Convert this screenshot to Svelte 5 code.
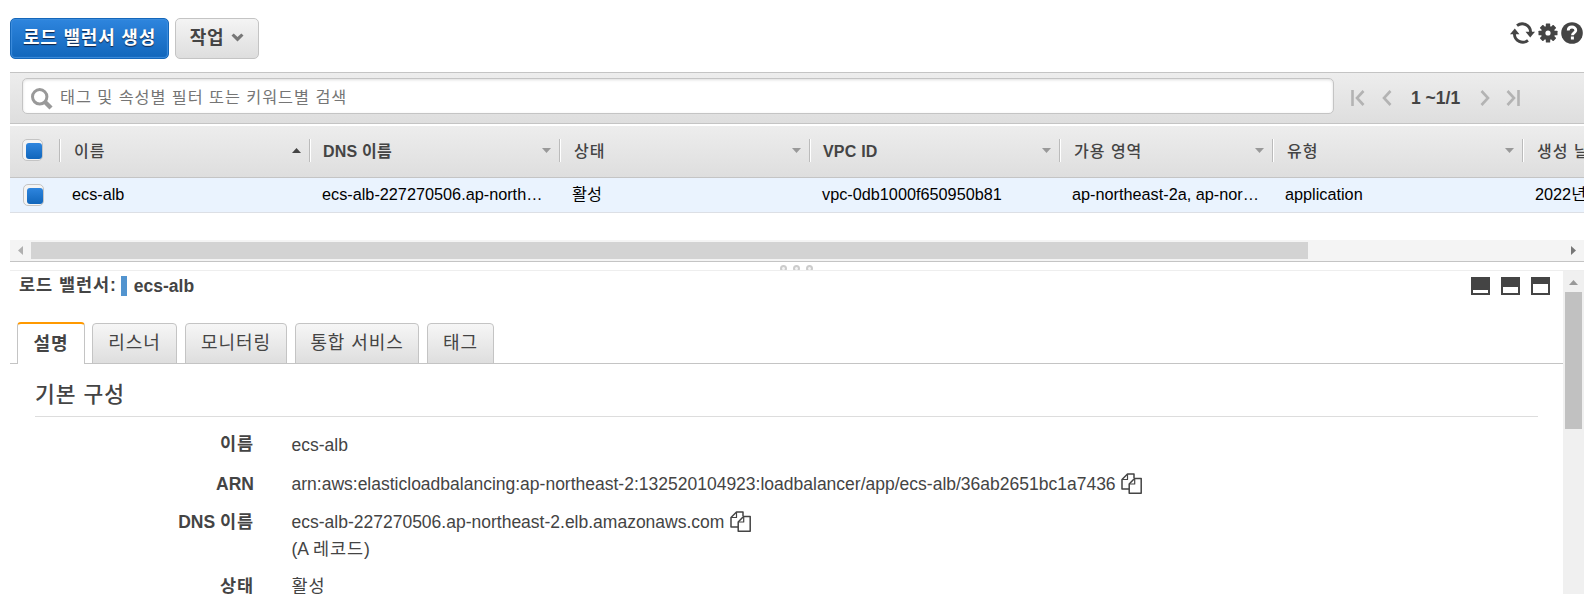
<script>
  let columns = [
    { title: "이름", value: "ecs-alb", width: 250, sort: "asc" },
    { title: "DNS 이름", value: "ecs-alb-227270506.ap-north…", width: 250, mixed: true },
    { title: "상태", value: "활성", width: 250 },
    { title: "VPC ID", value: "vpc-0db1000f650950b81", width: 250, mixed: true },
    { title: "가용 영역", value: "ap-northeast-2a, ap-nor…", width: 213 },
    { title: "유형", value: "application", width: 250 },
    { title: "생성 날짜", value: "2022년", width: 250 }
  ];
  let tabs = [
    { label: "설명", width: 68 },
    { label: "리스너", width: 85 },
    { label: "모니터링", width: 102 },
    { label: "통합 서비스", width: 124 },
    { label: "태그", width: 67 }
  ];
  let active = "설명";
  let arn = "arn:aws:elasticloadbalancing:ap-northeast-2:132520104923:loadbalancer/app/ecs-alb/36ab2651bc1a7436";
</script>

{#snippet copyIcon()}
  <svg class="copy" width="21" height="21" viewBox="0 0 21 21" fill="none" stroke="#444" stroke-width="1.5" stroke-linejoin="round">
    <path d="M8 16H1V6.5L6.5 1H13v4" />
    <path d="M6.5 1v5.5H1" stroke-width="1.2" />
    <path d="M8.2 11 13.5 5.5h6.7v14.7h-12z" />
    <path d="M13.7 5.5V11H8.2" stroke-width="1.2" />
  </svg>
{/snippet}

<div class="page">
  <header class="actions">
    <button class="btn primary">로드 밸런서 생성</button>
    <button class="btn">작업
      <svg width="13" height="9" viewBox="0 0 13 9"><path d="M.5 2.5 2.7.5 6.5 4 10.3.5l2.2 2L6.5 8.5z" fill="#777" /></svg>
    </button>
    <div class="tools">
      <svg width="25" height="22" viewBox="0 0 26 22" fill="none" stroke="#444" stroke-width="3">
        <path d="M7.3 3.4A8.7 8.7 0 0 1 21.4 10" />
        <path d="M18.7 18.6A8.7 8.7 0 0 1 4.6 12" />
        <path d="M16.2 9.8h9.8L21 15.8z" fill="#444" stroke="none" />
        <path d="M0 12.2h9.8L5 6.2z" fill="#444" stroke="none" />
      </svg>
      <svg width="20" height="20" viewBox="0 0 20 20" fill="#444">
        {#each [0, 45, 90, 135] as a}
          <rect x="7.8" y="0.5" width="4.4" height="19" rx="0.5" transform="rotate({a} 10 10)" />
        {/each}
        <circle cx="10" cy="10" r="7" />
        <circle cx="10" cy="10" r="2.6" fill="#fff" />
      </svg>
      <svg width="22" height="22" viewBox="0 0 22 22">
        <circle cx="11" cy="11" r="10.8" fill="#444" />
        <path d="M7.2 8.4C7.2 3.8 14.8 4 14.8 8.2c0 2.7-3.4 2.6-3.4 5" fill="none" stroke="#fff" stroke-width="2.8" />
        <rect x="9.9" y="14.5" width="3" height="3" fill="#fff" />
      </svg>
    </div>
  </header>

  <div class="filter">
    <div class="search">
      <svg width="22" height="22" viewBox="0 0 22 22" fill="none" stroke="#999">
        <circle cx="8.7" cy="8.8" r="7.2" stroke-width="3" />
        <path d="m14 14 6 6" stroke-width="4.4" />
      </svg>
      <span>태그 및 속성별 필터 또는 키워드별 검색</span>
    </div>
    <div class="pager">
      <svg width="14" height="18" viewBox="0 0 14 18"><path d="M1.5 1v16M12.5 2 6 9l6.5 7" /></svg>
      <svg width="10" height="18" viewBox="0 0 10 18"><path d="M8.5 2 2 9l6.5 7" /></svg>
      <b>1 ~1/1</b>
      <svg width="10" height="18" viewBox="0 0 10 18"><path d="m1.5 2 6.5 7-6.5 7" /></svg>
      <svg width="14" height="18" viewBox="0 0 14 18"><path d="m1.5 2 6.5 7-6.5 7M12.5 1v16" /></svg>
    </div>
  </div>

  <div class="grid">
    <div class="row head">
      <div class="pick"><i class="check"></i></div>
      {#each columns as col}
        <div class="th" style="width:{col.width}px">
          <span class:mixed={col.mixed}>{col.title}</span>
          <svg width="9" height="5" viewBox="0 0 9 5">
            {#if col.sort === "asc"}<path d="M0 5h9L4.5 0z" fill="#444" />{:else}<path d="M0 0h9L4.5 5z" fill="#999" />{/if}
          </svg>
        </div>
      {/each}
    </div>
    <div class="row body">
      <div class="pick"><i class="check"></i></div>
      {#each columns as col}
        <div class="td" style="width:{col.width}px">{col.value}</div>
      {/each}
    </div>
  </div>

  <div class="hscroll">
    <svg width="5" height="9" viewBox="0 0 5 9"><path d="M5 0v9L0 4.5z" fill="#b0b0b0" /></svg>
    <div class="thumb"></div>
    <svg width="5" height="9" viewBox="0 0 5 9"><path d="M0 0v9l5-4.5z" fill="#777" /></svg>
  </div>
  <div class="splitter"><i></i><i></i><i></i></div>

  <div class="detail">
    <section class="pane">
      <div class="pane-head">
        <b class="caption">로드 밸런서:</b><i class="mark"></i><b>ecs-alb</b>
        <div class="sizes">
          {#each [3, 6, 9] as h}
            <svg width="19" height="18" viewBox="0 0 19 18"><path d="M0 0h19v18H0z" fill="#444" /><rect x="2" y={16 - h} width="15" height={h} fill="#fff" /></svg>
          {/each}
        </div>
      </div>
      <nav class="tabs">
        {#each tabs as tab}
          <button class="tab" class:active={tab.label === active} style="width:{tab.width}px">{tab.label}</button>
        {/each}
      </nav>
      <h2>기본 구성</h2>
      <dl>
        <dt class="ko">이름</dt>
        <dd>ecs-alb</dd>
        <dt>ARN</dt>
        <dd>{arn}{@render copyIcon()}</dd>
        <dt>DNS <span class="ko">이름</span></dt>
        <dd>ecs-alb-227270506.ap-northeast-2.elb.amazonaws.com{@render copyIcon()}<br />(A <span class="ko">레코드</span>)</dd>
        <dt class="ko last">상태</dt>
        <dd class="ko last">활성</dd>
      </dl>
    </section>
    <div class="vscroll">
      <svg width="9" height="5" viewBox="0 0 9 5"><path d="M0 5h9L4.5 0z" fill="#999" /></svg>
      <div class="thumb"></div>
    </div>
  </div>
</div>

<style>
  :global(body) { margin: 0; background: #fff; overflow: hidden; }
  * { box-sizing: border-box; }
  svg { display: block; flex: none; }
  .page { width: 1584px; height: 594px; padding-left: 10px; overflow: hidden; display: flex; flex-direction: column; color: #444; font: 17.5px "Liberation Sans", "Noto Sans CJK KR", sans-serif; }

  .actions { height: 72px; flex: none; padding-top: 18px; display: flex; align-items: flex-start; gap: 6px; }
  .btn { height: 41px; width: 84px; padding: 0 0 5px; display: flex; align-items: center; justify-content: center; gap: 7px; border: 1px solid #c4c4c4; border-radius: 5px; background: linear-gradient(#f4f4f4, #dedede); color: #444; font: bold 18px "Liberation Sans", "Noto Sans CJK KR", sans-serif; letter-spacing: 0.8px; white-space: nowrap; }
  .btn.primary { width: 159px; border-color: #1567ba; background: linear-gradient(#2e85de, #1166bb); color: #fff; text-shadow: 0 1px 1px #124; box-shadow: inset 0 0 1px 1px #3d8ddd; }
  .btn svg { margin-top: 2px; }
  .tools { margin-left: auto; padding: 4px 1px 0 0; display: flex; align-items: center; gap: 3px; }

  .filter { height: 52px; flex: none; padding: 5px 0 0 12px; display: flex; align-items: flex-start; border-top: 1px solid #c4c4c4; border-bottom: 1px solid #c4c4c4; background: linear-gradient(#ededed, #dedede); }
  .search { width: 1312px; height: 36px; padding-left: 8px; display: flex; align-items: center; gap: 7px; border: 1px solid #c4c4c4; border-radius: 5px; background: #fff; box-shadow: inset 0 1px 3px #ddd; color: #757575; font-size: 16.25px; letter-spacing: 0.95px; }
  .search svg { margin-top: 5px; }
  .pager { height: 40px; margin-left: 17px; display: flex; align-items: center; }
  .pager svg { fill: none; stroke: #b3b3b3; stroke-width: 2.6; }
  .pager svg:nth-child(2) { margin-left: 17px; }
  .pager b { width: 50px; margin: 0 19px 0 19px; white-space: nowrap; font-size: 17.5px; }
  .pager svg:last-child { margin-left: 16px; }

  .grid { margin-top: 2px; flex: none; }
  .row { width: 1800px; display: flex; }
  .head { height: 52px; align-items: center; border-bottom: 1px solid #c4c4c4; background: linear-gradient(#ededed, #dedede); font-weight: bold; font-size: 16px; }
  .pick { width: 49px; flex: none; padding-left: 12px; }
  .check { width: 21px; height: 22px; display: block; border: 1px solid #c4c4c4; border-radius: 5px; padding: 3px 0 0 3px; background: #f4f4f4; }
  .head .check { margin-top: -3px; }
  .body .check { margin-top: 1px; }
  .check::before { content: ""; display: block; width: 16px; height: 16px; border-radius: 3px; background: linear-gradient(#2e85de, #1166bb); }
  .th { height: 23px; margin-top: -3px; padding: 0 8px 0 14px; flex: none; display: flex; align-items: center; justify-content: space-between; border-left: 1px solid #bbb; box-shadow: inset 1px 0 #fff; letter-spacing: 1px; line-height: 26px; font-weight: 500; }
  .th span { height: 23px; }
  .th svg { margin-top: 1px; }
  .th .mixed { margin-left: -1px; letter-spacing: 0.2px; font-weight: bold; }
  .body { height: 35px; padding-bottom: 2px; align-items: center; border-bottom: 1px solid #dcdfe5; background: #eaf3fe; color: #000; font-size: 16.25px; }
  .body .pick { padding-left: 13px; }
  .td { flex: none; padding-left: 13px; white-space: nowrap; line-height: 24px; height: 24px; }

  .hscroll { height: 22px; margin-top: 27px; flex: none; padding: 0 8px; display: flex; align-items: center; border-bottom: 1px solid #c4c4c4; background: #f4f4f4; }
  .hscroll .thumb { width: 1277px; height: 17px; margin: 0 auto 0 8px; background: #d3d3d3; }
  .splitter { height: 9px; flex: none; padding: 3px 1px 0 0; display: flex; justify-content: center; gap: 6px; border-bottom: 1px solid #eee; overflow: hidden; }
  .splitter i { width: 7px; height: 7px; flex: none; border: 2px solid #ccc; border-radius: 50%; background: #f5f5f5; }

  .detail { flex: 1; min-height: 0; display: flex; }
  .pane { width: 1553px; overflow: hidden; }
  .pane-head { height: 51px; padding: 5px 13px 0 9px; display: flex; align-items: flex-start; line-height: 20px; }
  .pane-head .caption { margin-top: -1px; letter-spacing: 0.95px; }
  .mark { width: 6px; height: 20px; margin: 0 7px 0 4px; background: #5294cf; }
  .sizes { margin: 1px 0 0 auto; display: flex; gap: 11px; }
  .tabs { height: 42px; padding-left: 7px; display: flex; gap: 8px; align-items: flex-end; background: linear-gradient(#c4c4c4, #c4c4c4) bottom / 100% 1px no-repeat; }
  .tab { height: 41px; padding: 0 0 5px; border: 1px solid #c4c4c4; border-radius: 4px 4px 0 0; background: linear-gradient(#f6f6f6, #dedede); color: #444; font: 18px "Liberation Sans", "Noto Sans CJK KR", sans-serif; letter-spacing: 0.9px; white-space: nowrap; }
  .tab.active { height: 42px; margin-right: -1px; border-top: 2px solid #f90; border-bottom: 0; background: #fff; font-weight: bold; }
  h2 { height: 53px; margin: 0 25px; line-height: 62px; border-bottom: 1px solid #ddd; font-size: 21.5px; font-weight: 500; letter-spacing: 1px; }
  dl { margin: 15px 0 0; display: grid; grid-template-columns: 244px 1fr; column-gap: 37.5px; row-gap: 11.5px; line-height: 27px; }
  dt { text-align: right; font-weight: bold; }
  dt.ko { line-height: 25px; }
  dd { margin: 0; white-space: nowrap; }
  .copy { display: inline-block; margin-left: 5.5px; vertical-align: -4px; }
  .ko { letter-spacing: 0.9px; }
  .last { margin-top: -1px; line-height: 25px; }
  .vscroll { width: 21px; padding-top: 9px; display: flex; flex-direction: column; align-items: center; background: #f0f0f0; }
  .vscroll .thumb { width: 17px; height: 137px; margin-top: 7px; background: #c1c1c1; }
</style>
